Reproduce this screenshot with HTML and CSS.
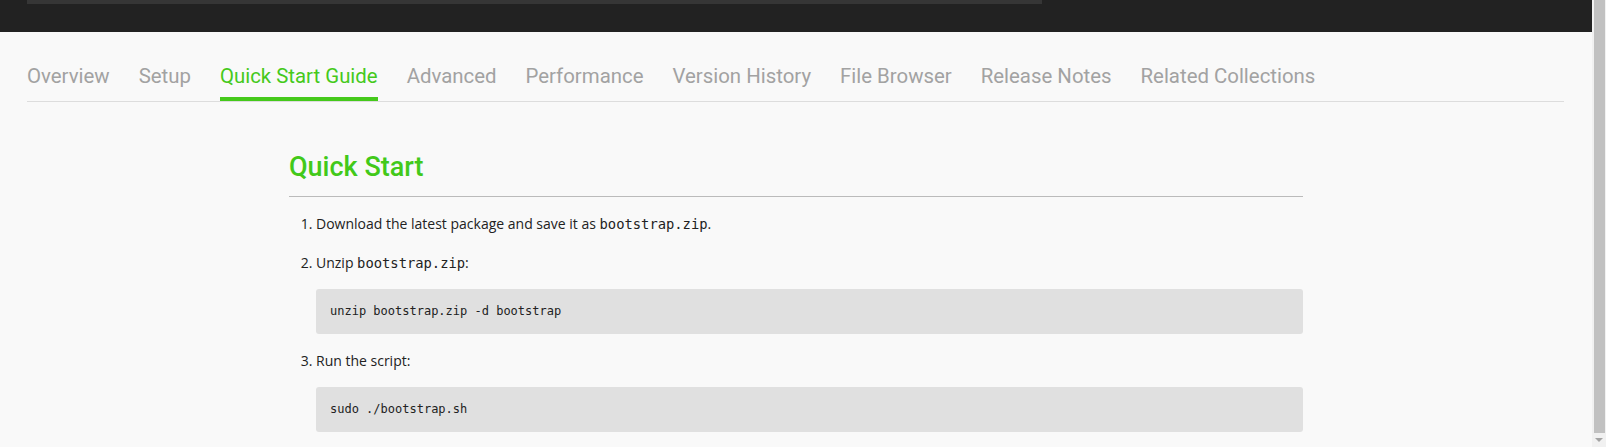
FILE: index.html
```html
<!DOCTYPE html>
<html lang="en">
<head>
<meta charset="utf-8">
<title>Quick Start Guide</title>
<link rel="stylesheet" href="styles.css">
</head>
<body>
<div class="page">
  <div class="main">
    <header class="topbar"><div class="search"></div></header>
    <nav class="tabs">
      <ul>
        <li><a>Overview</a></li>
        <li><a>Setup</a></li>
        <li><a class="active">Quick Start Guide</a></li>
        <li><a>Advanced</a></li>
        <li><a>Performance</a></li>
        <li><a>Version History</a></li>
        <li><a>File Browser</a></li>
        <li><a>Release Notes</a></li>
        <li><a>Related Collections</a></li>
      </ul>
    </nav>
    <article class="doc">
      <h2 class="doc-title">Quick Start</h2>
      <ol class="steps">
        <li><p>Download the latest package and save it as <code>bootstrap.zip</code>.</p></li>
        <li><p>Unzip <code>bootstrap.zip</code>:</p>
          <pre>unzip bootstrap.zip -d bootstrap</pre></li>
        <li><p>Run the script:</p>
          <pre>sudo ./bootstrap.sh</pre></li>
      </ol>
    </article>
  </div>
  <div class="scrollbar"><div class="thumb"></div><div class="arrow"></div></div>
</div>
</body>
</html>
```
FILE: styles.css
```css
html, body {
  margin: 0;
  padding: 0;
  background: #f9f9f9;
}
.page {
  display: flex;
  height: 447px;
  overflow: hidden;
}
.main {
  flex: 1;
  min-width: 0;
}
.topbar {
  height: 32px;
  background: #222222;
  padding: 0 27px;
}
.search {
  width: 1015px;
  height: 4px;
  background: #363636;
}
.tabs ul {
  list-style: none;
  margin: 32px 28px 0 27px;
  padding: 0;
  display: flex;
  gap: 29px;
  border-bottom: 1px solid #dddddd;
}
.tabs a {
  display: block;
  font-family: Roboto, "Liberation Sans", sans-serif;
  font-size: 20.4px;
  line-height: 24px;
  color: #a2a2a2;
  padding-bottom: 9px;
  border-bottom: 4px solid transparent;
}
.tabs a.active {
  color: #45c91b;
  border-bottom-color: #45c91b;
}
.doc {
  max-width: 1014px;
  margin: 48px auto 0;
}
.doc-title {
  margin: 0;
  font-family: Roboto, "Liberation Sans", sans-serif;
  font-weight: 500;
  font-size: 27px;
  line-height: 34px;
  color: #42c91a;
  padding-bottom: 12px;
  border-bottom: 1px solid #bbbbbb;
}
.steps {
  margin: 15px 0 0;
  padding-left: 27px;
  font-family: "Open Sans", "Noto Sans", sans-serif;
  font-size: 14px;
  line-height: 24px;
  color: #222222;
}
.steps li {
  margin-bottom: 15px;
}
.steps p {
  margin: 0;
}
.steps code {
  font-family: "DejaVu Sans Mono", monospace;
  font-size: 13.8px;
}
.steps pre {
  margin: 14px 0 0;
  padding: 13px 14px 14px;
  background: #e0e0e0;
  border-radius: 3px;
  font-family: "DejaVu Sans Mono", monospace;
  font-size: 12px;
  line-height: 18px;
  color: #222222;
}
.scrollbar {
  width: 14px;
  background: #f1f1f1;
  display: flex;
  flex-direction: column;
  align-items: flex-end;
}
.thumb {
  width: 11px;
  height: 433px;
  margin-right: 1px;
  background: #c1c1c1;
}
.arrow {
  margin: 5px 3px 0 0;
  width: 0;
  height: 0;
  border-left: 4px solid transparent;
  border-right: 4px solid transparent;
  border-top: 4px solid #a3a3a3;
}
```
